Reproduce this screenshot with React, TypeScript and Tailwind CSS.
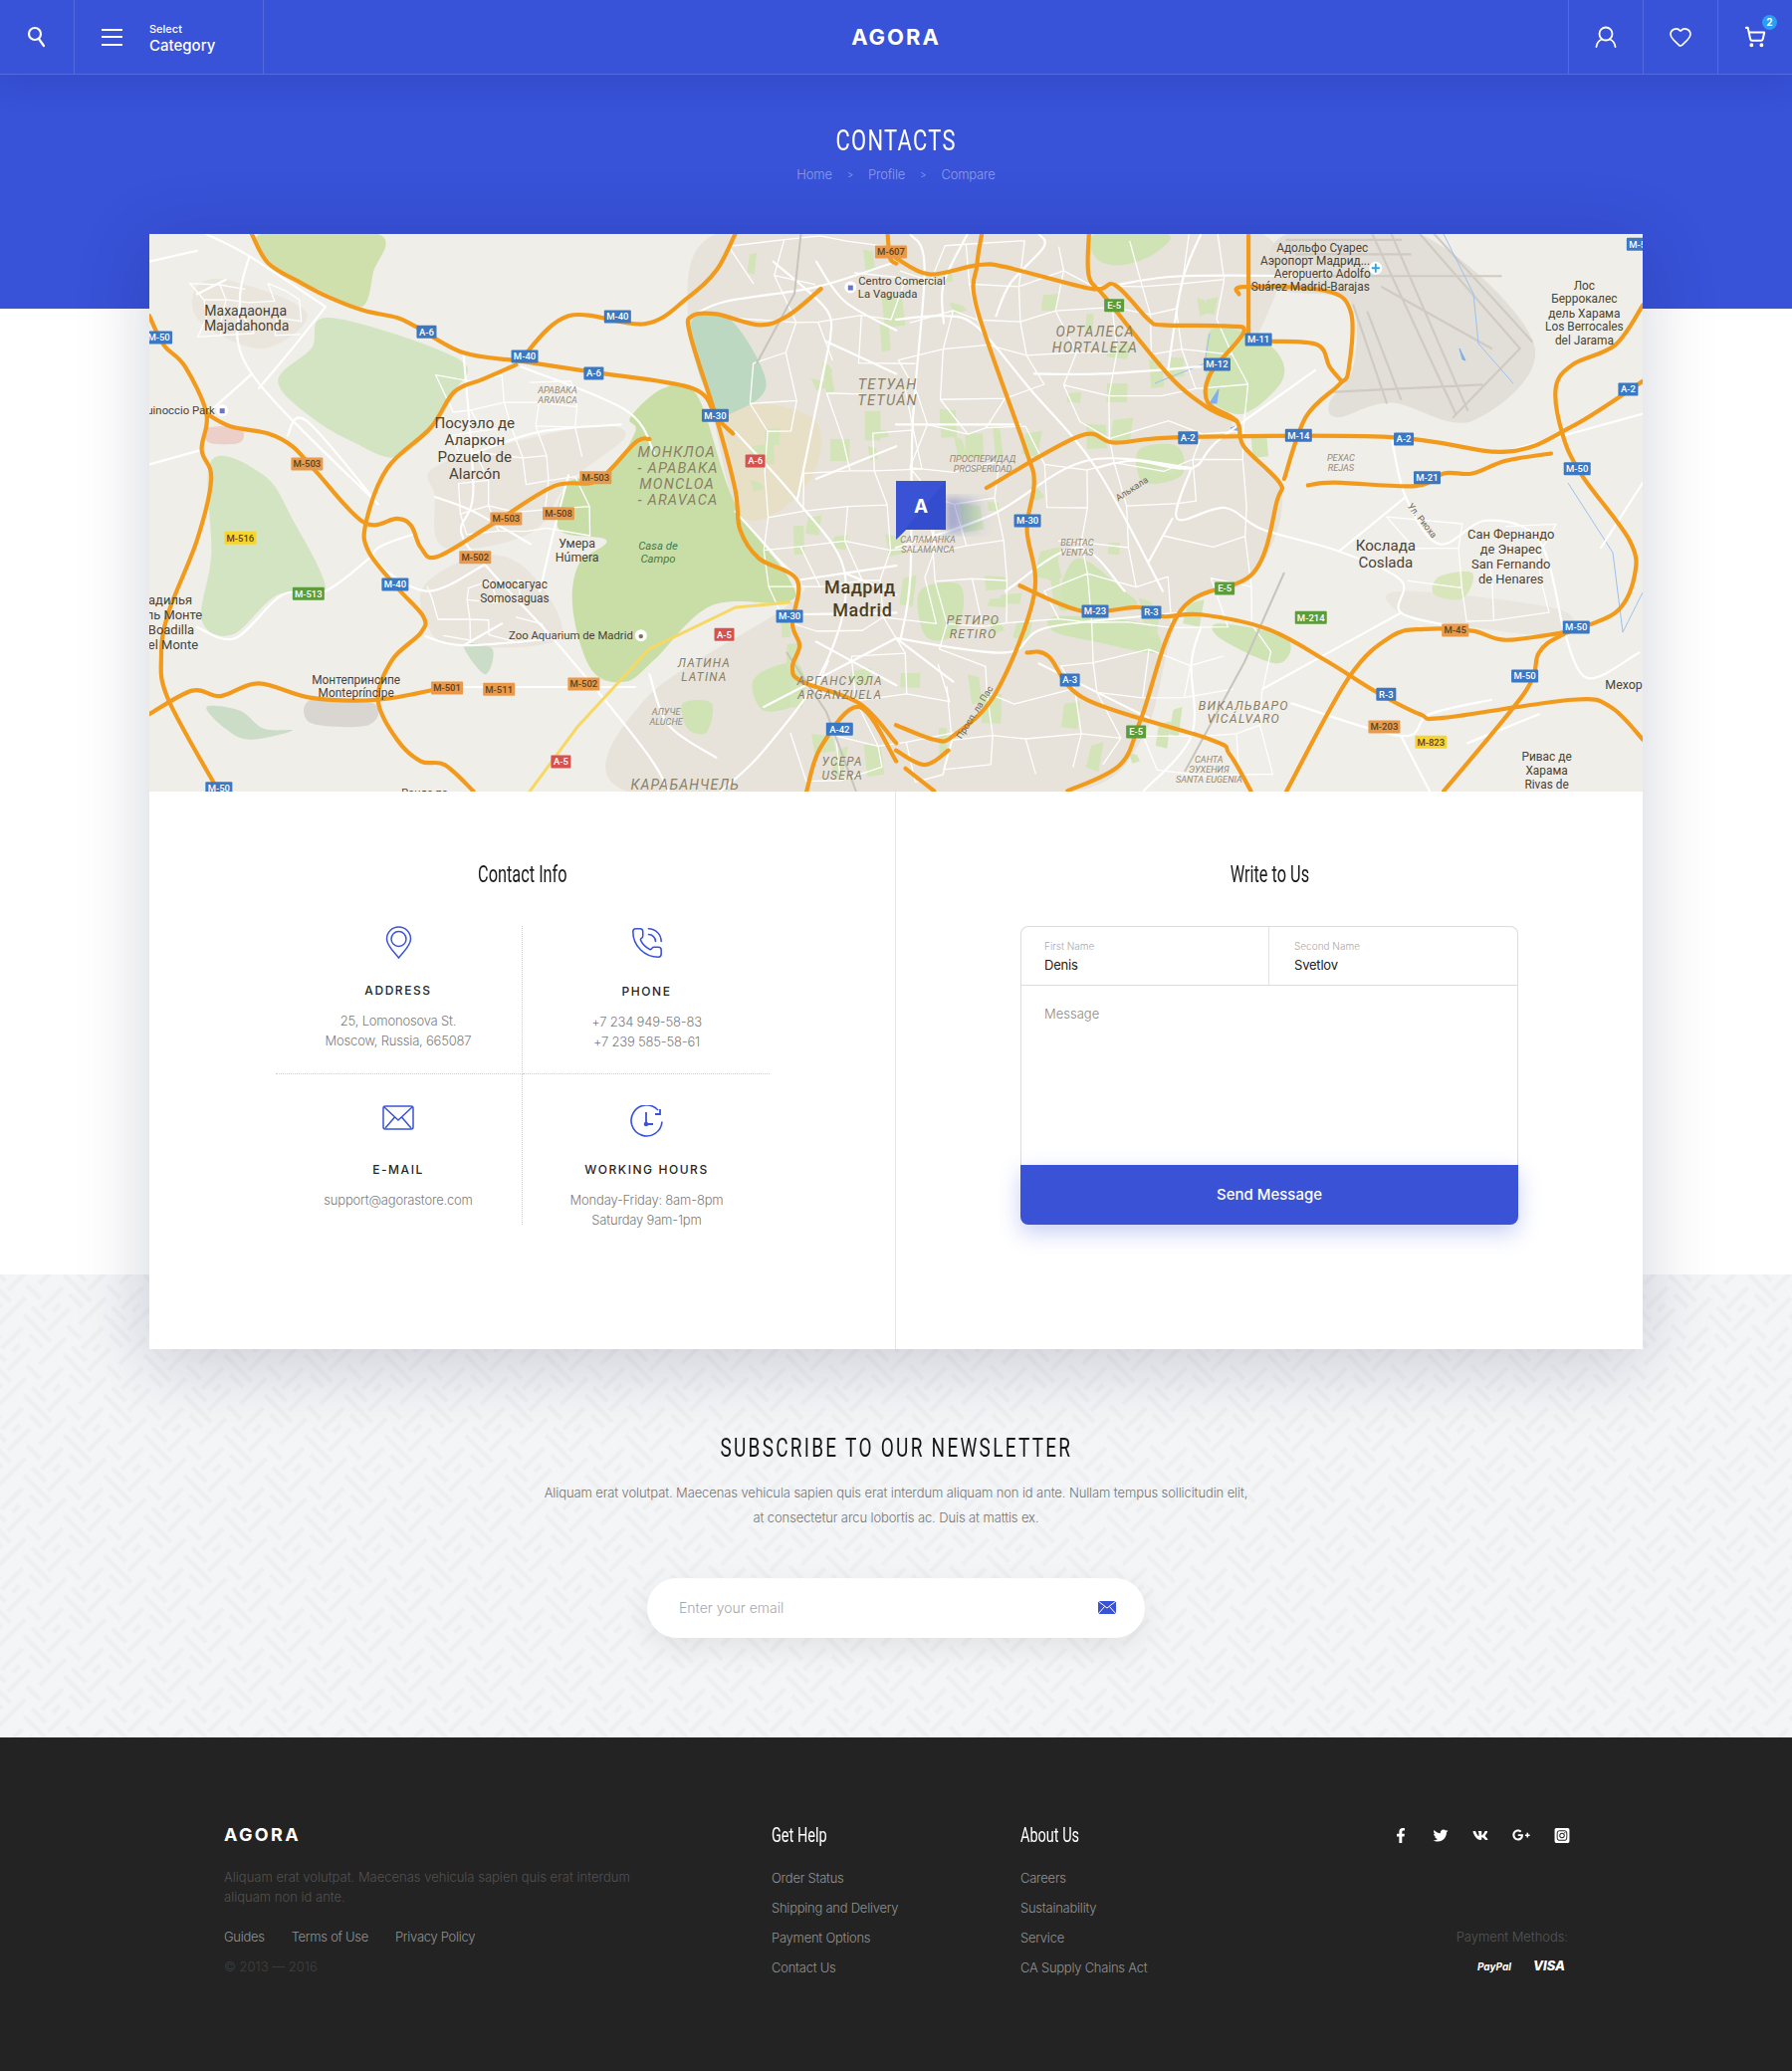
import { Heart, ShoppingCart, PhoneCall } from "lucide-react";
import { FaFacebookF, FaTwitter, FaVk, FaGooglePlusG, FaInstagramSquare } from "react-icons/fa";

const SX = 1 / 2.09;
const SY = 1 / 2.75;
const px = (side: string, x: number) => (side === "L" ? 0 : 750) + x * SX;
const py = (y: number) => y * SY - 5;

function smooth(d: string): string {
  const closed = /Z\s*$/.test(d);
  return d
    .split("M")
    .filter((s) => s.trim())
    .map((sub) => {
      const n = (sub.match(/-?\d+(\.\d+)?/g) || []).map(Number);
      const p: [number, number][] = [];
      for (let i = 0; i + 1 < n.length; i += 2) p.push([n[i], n[i + 1]]);
      const at = (i: number) => (closed ? p[(i + p.length) % p.length] : p[Math.max(0, Math.min(p.length - 1, i))]);
      let out = `M${p[0][0]},${p[0][1]}`;
      const segs = closed ? p.length : p.length - 1;
      for (let i = 0; i < segs; i++) {
        const a = at(i - 1), b = at(i), c = at(i + 1), e = at(i + 2);
        const k = 0.17;
        out += ` C${(b[0] + (c[0] - a[0]) * k).toFixed(1)},${(b[1] + (c[1] - a[1]) * k).toFixed(1)} ${(c[0] - (e[0] - b[0]) * k).toFixed(1)},${(c[1] - (e[1] - b[1]) * k).toFixed(1)} ${c[0]},${c[1]}`;
      }
      return out + (closed ? " Z" : "");
    })
    .join(" ");
}

// seeded random so the drawing is the same on every run
function rng(seed: number) {
  let s = seed;
  return () => {
    s = (s * 16807) % 2147483647;
    return (s - 1) / 2147483646;
  };
}

function streets(side: string, x0: number, y0: number, x1: number, y1: number, dx: number, dy: number, seed: number): [string, string][] {
  const r = rng(seed);
  const pts: [number, number][][] = [];
  for (let y = y0; y <= y1; y += dy) {
    const row: [number, number][] = [];
    for (let x = x0; x <= x1; x += dx) row.push([Math.round(x + (r() - 0.5) * dx * 0.6 + (y - y0) * 0.08), Math.round(y + (r() - 0.5) * dy * 0.5)]);
    pts.push(row);
  }
  let d = "";
  pts.forEach((row, j) =>
    row.forEach((p, i) => {
      if (i + 1 < row.length && r() > 0.3) d += `M${p[0]},${p[1]} L${row[i + 1][0]},${row[i + 1][1]} `;
      if (j + 1 < pts.length && r() > 0.3) d += `M${p[0]},${p[1]} L${pts[j + 1][i][0]},${pts[j + 1][i][1]} `;
    })
  );
  return [[side, d]];
}

function patches(side: string, x0: number, y0: number, x1: number, y1: number, count: number, seed: number): [string, string, string][] {
  const r = rng(seed);
  const out: [string, string, string][] = [];
  for (let i = 0; i < count; i++) {
    const x = Math.round(x0 + r() * (x1 - x0));
    const y = Math.round(y0 + r() * (y1 - y0));
    const w = 14 + r() * 30;
    const h = 22 + r() * 60;
    const t = r() * 24 - 12;
    out.push([side, `M${x},${y} L${(x + w).toFixed(0)},${(y + t).toFixed(0)} L${(x + w + t).toFixed(0)},${(y + h).toFixed(0)} L${(x + t).toFixed(0)},${(y + h + t).toFixed(0)} Z`, "#d3e4b8"]);
  }
  return out;
}

const greens: [string, string, string][] = [
  ["L", "M235,14 L480,14 L470,120 L445,215 L360,170 L270,110 Z", "#cfe0ad"],
  ["L", "M380,245 L650,360 L640,450 L600,540 L520,630 L430,590 L340,520 L270,420 L340,330 Z", "#d3e4c3"],
  ["L", "M130,640 L240,680 L300,800 L370,1000 L270,1010 L175,1120 L110,1080 L130,900 Z", "#d3e4c3"],
  ["L", "M1080,440 L1150,460 L1230,760 L1340,960 L1340,1030 L1180,1040 L1060,1190 L1000,1250 L930,1220 L890,1060 L900,930 L960,860 L860,830 L880,700 L960,680 L1020,560 L1010,520 Z", "#c9dea6"],
  ["L", "M120,1320 L190,1330 L240,1380 L300,1385 L210,1410 L160,1380 Z", "#cbddc6"],
  ["L", "M660,1150 L720,1160 L705,1230 Z", "#cbddc6"],
  ["L", "M1140,250 L1220,250 L1295,430 L1220,510 L1190,500 L1150,380 Z", "#bcd8c0"],
  ["L", "M1270,1240 L1360,1200 L1370,1300 L1290,1330 Z", "#cfe3b4"],
  ["L", "M1120,1310 L1180,1310 L1170,1390 L1130,1380 Z", "#cfe3b4"],
  ["R", "M420,14 L570,14 L540,70 L470,100 L420,80 Z", "#cfe3b4"],
  ["R", "M660,280 L730,285 L800,340 L810,420 L730,510 L660,470 L650,400 Z", "#cfe3b4"],
  ["R", "M380,910 L480,1000 L500,1040 L390,1050 L340,1040 Z", "#cfe3b4"],
  ["R", "M50,1000 L130,980 L140,1060 L110,1130 L60,1120 Z", "#cfe3b4"],
  ["R", "M510,610 L590,600 L600,680 L520,700 Z", "#cfe3b4"],
  ["R", "M680,1090 L820,1130 L800,1200 L680,1130 Z", "#cfe3b4"],
  ["R", "M340,1070 L520,1090 L550,1170 L420,1140 L330,1110 Z", "#cfe3b4"],
  ["R", "M1140,960 L1210,950 L1190,1020 L1130,1010 Z", "#d9e6bc"],
];

const grays: [string, string, string][] = [
  ["L", "M1190,14 L1568,14 L1568,1552 L1000,1552 L1040,1300 L1340,1040 L1360,960 L1240,800 L1180,500 L1130,250 Z", "#e7e3da"],
  ["L", "M610,650 L900,550 L1000,570 L880,700 L800,840 L620,880 L600,740 Z", "#e9e5dd"],
  ["L", "M580,980 L700,900 L800,950 L860,1130 L640,1150 L580,1080 Z", "#e9e5dd"],
  ["L", "M95,170 L160,140 L330,230 L240,330 L110,260 Z", "#eae6de"],
  ["L", "M1220,500 L1390,520 L1400,660 L1320,780 L1240,780 Z", "#e8dfc7"],
  ["L", "M120,550 L190,550 L190,590 L125,590 Z", "#eccfc9"],
  ["L", "M340,1300 L470,1310 L460,1370 L340,1365 Z", "#d9d5d0"],
  ["R", "M0,14 L770,14 L700,500 L810,720 L750,960 L600,1060 L520,1400 L380,1552 L0,1552 Z", "#e7e3da"],
  ["R", "M820,14 L1100,14 L1340,320 L1210,530 L1040,480 L930,520 L910,480 L960,380 L950,200 L800,160 Z", "#e2dfd9"],
  ["R", "M1060,1000 L1390,1050 L1390,1120 L1210,1100 L1060,1060 Z", "#e9e6df"],
];

const tinyGreens: [string, string, string][] = [
  ...patches("L", 1260, 40, 1560, 1500, 26, 11),
  ...patches("R", 10, 30, 760, 1500, 46, 29),
];

const grid: [string, string][] = [
  ...streets("L", 1240, 40, 1568, 1540, 80, 105, 5),
  ...streets("R", 0, 30, 760, 1540, 85, 105, 17),
  ...streets("L", 620, 420, 880, 880, 65, 70, 23),
  ...streets("L", 100, 160, 330, 320, 50, 45, 31),
  ...streets("L", 600, 980, 820, 1140, 55, 50, 37),
  ...streets("R", 1060, 800, 1390, 1080, 100, 90, 41),
];

const white: [string, string][] = [
  ["L", "M120,14 L210,75 L370,215 M210,75 L190,200 L215,400 L480,760 M0,90 L100,60 M0,650 L110,610 M290,570 L330,530 L480,760 M230,440 L300,330 L370,215 M100,180 L160,140 M130,500 L190,430 L215,400"],
  ["L", "M660,350 L680,720 L655,840 L720,950 L860,1150 L1040,1440 L1090,1552 M780,380 L1000,500 L1060,620 M880,680 L850,830 L820,1000 M990,540 L820,560 L680,620 M600,740 L680,780 L800,870 M700,930 L580,1000 L470,900 L560,840"],
  ["L", "M100,1100 L180,1130 L280,1010 L370,1000 L470,900 M580,1125 L660,1150 L860,1130 M600,1265 L1020,1265 M740,1090 L660,1150 M1230,780 L1360,970 M1360,970 L1568,930 M1430,300 L1360,750 M1420,310 L1568,400 M1230,560 L1360,750 L1460,950 L1420,1200 L1290,1440 L1200,1552 M1568,600 L1400,690 M1340,1065 L1568,1060"],
  ["L", "M1140,240 L1210,200 L1400,160 L1568,90 M1310,90 L1420,220 L1430,300 M1400,90 L1460,200 L1568,280 M1050,1230 L1090,1370 L1190,1460 M1290,1320 L1568,1130 M1400,1140 L1568,1260 M1460,950 L1568,1010"],
  ["R", "M30,14 L60,110 L35,540 L30,960 L10,1130 M0,250 L100,240 L170,270 L280,440 L420,660 L560,1000 M0,540 L260,540 M0,880 L200,790 L400,640 L620,660 M230,1000 L380,880 L480,1000 M300,14 L310,50 L240,150 L210,240 M290,400 L430,400 L640,380"],
  ["R", "M620,660 L590,800 L690,770 L770,830 L930,890 L1060,970 L1060,1060 L1180,1100 M580,800 L530,920 M420,660 L500,640 L620,660 L680,580 L880,390 M0,1130 L230,1170 L320,1100 L600,1060 M640,1100 L620,1200 L620,1400 L520,1552 M830,1310 L1060,1400 L1120,1340 L1250,1300"],
  ["R", "M1040,575 L1070,740 L1140,870 L1240,805 L1350,860 L1400,1100 M1070,740 L930,890 M1280,615 L1568,510 M1480,880 L1568,700 M1400,1100 L1450,1240 L1560,1170 M1200,1420 L1350,1340 M1120,1552 L1060,1400 M300,1200 L530,1350 M120,1250 L0,1130"],
  ["R", "M640,14 L600,150 L570,400 M1060,1060 L770,1270 M150,14 L100,150 L100,260 M460,155 L600,130 L880,130"],
];

const runways: [string, string][] = [
  ["R", "M1100,14 L1310,330 L1170,520 M1130,14 L1335,310 M1000,14 L1175,510 M1040,14 L1200,500 M960,210 L1030,480 M990,230 L1060,470 M860,130 L1270,130 M920,450 L1230,430 M1020,160 L1250,330 M820,30 L1060,30 M840,70 L1080,70"],
];

const orange: [string, string][] = [
  ["L", "M215,14 L250,95 L320,150 L380,190 L450,225 L520,245 L560,270 L660,342 L780,365 L930,395 L1140,440 L1190,520 L1225,565"],
  ["L", "M780,360 L880,240 L1040,262 L1130,190 L1190,115 L1230,14"],
  ["L", "M770,375 L700,415 L640,450 L590,550 L500,660 L455,810 L460,890 L520,990 L575,1070 L570,1115 L510,1190 L480,1300 L520,1410 L570,1470 L620,1480 L680,1552"],
  ["L", "M1410,165 L1340,240 L1280,265 L1190,235 L1140,240 L1135,290 L1190,520 L1230,720 L1240,830 L1280,910 L1360,970 L1350,1090 L1365,1150 L1350,1210 L1370,1250 L1490,1310 L1568,1420"],
  ["L", "M0,240 L30,320 L75,380 L120,510 L110,610 L130,690 L100,860 L40,1060 L25,1180 L40,1300 L145,1552"],
  ["L", "M120,510 L170,545 L250,565 L300,600 L350,670 L450,810 L520,800 L550,820 L570,880 L605,905 L720,815 L850,710 L940,695 L1020,590 L1050,580"],
  ["L", "M0,1340 L90,1275 L150,1290 L230,1255 L340,1295 L480,1300 L600,1272"],
  ["L", "M1380,1552 L1410,1430 L1490,1320 L1568,1470"],
  ["L", "M1550,14 L1555,80 L1568,95"],
  ["R", "M180,14 L170,100 L170,220 L270,600 L290,700 L275,830 L290,1010 L210,1280 L120,1400 L80,1410 L0,1370"],
  ["R", "M0,80 L70,125 L170,100 L230,105 L410,165 L460,155 L530,250 L560,265 L690,268 L730,285 L660,400 L655,480 L715,530 L730,600 L805,700 L800,750 L750,950 L600,1050 L515,1350 L470,1480 L360,1552"],
  ["R", "M405,14 L405,130 L440,190 L570,400 L650,490 L715,530"],
  ["R", "M740,14 L740,285"],
  ["R", "M720,180 L730,160 L900,170 L955,230 L950,390 L930,430 L860,520 L815,690"],
  ["R", "M790,310 L885,320 L910,380 L935,420"],
  ["R", "M190,715 L385,572 L460,590 L600,575 L1040,575 L1280,615 L1420,545 L1568,420"],
  ["R", "M1568,210 L1510,320 L1420,375 L1385,440 L1400,570 L1440,680 L1540,860 L1550,960 L1510,1060 L1400,1120 L1350,1170 L1320,1280 L1150,1552"],
  ["R", "M865,708 L920,700 L1090,710 L1150,675 L1210,675 L1280,640 L1375,620"],
  ["R", "M260,985 L390,1055 L510,1045 L560,1070 L640,1065 L780,1105 L900,1190 L1010,1280 L1100,1340 L1150,1350 L1420,1300 L1500,1320 L1568,1410"],
  ["R", "M820,1552 L950,1240 L1040,1125 L1110,1105 L1210,1110 L1280,1135 L1400,1115"],
  ["R", "M275,1170 L320,1180 L400,1300 L660,1410 L700,1450 L745,1552"],
  ["R", "M0,1440 L60,1480 L110,1440"],
  ["R", "M20,1490 L80,1552"],
];

const SHIELD: Record<string, string> = { b: "#3b78c4", o: "#e89a4a", g: "#5d9c3c", r: "#d6524f", y: "#f7d52e" };
const shields: [string, string, number, number, string][] = [
  ["L","M-50",20,300,"b"],["L","A-6",582,284,"b"],["L","M-40",983,242,"b"],["L","M-40",788,352,"b"],["L","A-6",933,399,"b"],["L","M-30",1188,515,"b"],["L","A-6",1272,641,"r"],["L","M-503",331,649,"o"],["L","M-503",937,687,"o"],["L","M-508",859,786,"o"],["L","M-503",749,800,"o"],["L","M-502",684,907,"o"],["L","M-516",191,853,"y"],["L","M-513",334,1007,"g"],["L","M-40",516,982,"b"],["L","M-30",1344,1070,"b"],["L","A-5",1207,1120,"r"],["L","M-501",625,1268,"o"],["L","M-511",734,1271,"o"],["L","M-502",912,1257,"o"],["L","A-5",864,1471,"r"],["L","A-42",1449,1381,"b"],["L","M-50",146,1545,"b"],["L","M-607",1557,63,"o"],
  ["R","E-5",458,211,"g"],["R","M-11",761,305,"b"],["R","M-12",674,374,"b"],["R","A-2",1537,443,"b"],["R","A-2",613,577,"b"],["R","M-14",845,570,"b"],["R","A-2",1066,580,"b"],["R","M-50",1430,662,"b"],["R","M-21",1115,687,"b"],["R","M-30",276,806,"b"],["R","E-5",690,993,"g"],["R","M-23",418,1056,"b"],["R","R-3",536,1059,"b"],["R","M-214",871,1073,"g"],["R","M-45",1174,1108,"o"],["R","M-50",1428,1100,"b"],["R","M-50",1320,1235,"b"],["R","A-3",365,1246,"b"],["R","R-3",1029,1285,"b"],["R","E-5",504,1389,"g"],["R","M-203",1025,1375,"o"],["R","M-823",1123,1417,"y"],["R","M-50",1562,42,"b"],
];

const labels: [string, string, number, number, number, string, string?][] = [
  ["L","Махадаонда",202,225,13,"n"],["L","Majadahonda",204,268,13,"n"],
  ["L","Посуэло де",683,535,14,"n"],["L","Аларкон",683,581,14,"n"],["L","Pozuelo de",683,628,14,"n"],["L","Alarcón",683,675,14,"n"],
  ["L","uinoccio Park",66,500,10.5,"n"],["L","АРАВАКА",857,445,8.5,"s"],["L","ARAVACA",857,473,8.5,"s"],
  ["L","МОНКЛОА",1107,617,13.5,"d"],["L","- АРАВАКА",1110,660,13.5,"d"],["L","MONCLOA",1108,705,13.5,"d"],["L","- ARAVACA",1110,749,13.5,"d"],
  ["L","ТЕТУАН",1550,430,13.5,"d"],["L","TETUÁN",1550,473,13.5,"d"],
  ["L","Умера",898,868,11.5,"n"],["L","Húmera",898,906,11.5,"n"],["L","Casa de",1068,875,10.5,"g"],["L","Campo",1068,911,10.5,"g"],
  ["L","Мадрид",1492,990,18,"b"],["L","Madrid",1497,1052,18,"b"],
  ["L","Centro Comercial",1580,143,10.5,"n"],["L","La Vaguada",1550,179,10.5,"n"],
  ["L","Сомосагуас",767,981,11,"n"],["L","Somosaguas",767,1019,11,"n"],["L","Zoo Aquarium de Madrid",885,1122,10.5,"n"],
  ["L","адилья",44,1025,12,"n"],["L","ль Монте",52,1065,12,"n"],["L","Boadilla",46,1107,12,"n"],["L","el Monte",50,1148,12,"n"],
  ["L","Монтепринсипе",434,1244,11,"n"],["L","Montepríncipe",434,1282,11,"n"],
  ["L","ЛАТИНА",1165,1199,11,"d"],["L","LATINA",1165,1238,11,"d"],["L","АРГАНСУЭЛА",1450,1249,11,"d"],["L","ARGANZUELA",1450,1287,11,"d"],
  ["L","АЛУЧЕ",1085,1333,8.5,"s"],["L","ALUCHE",1085,1361,8.5,"s"],["L","УСЕРА",1455,1472,11,"d"],["L","USERA",1455,1510,11,"d"],
  ["L","КАРАБАНЧЕЛЬ",1125,1535,13,"d"],["L","Ронда по",578,1556,10,"n"],
  ["R","Адольфо Суарес",895,52,11,"n"],["R","Аэропорт Мадрид...",880,88,11,"n"],["R","Aeropuerto Adolfo",895,124,11,"n"],["R","Suárez Madrid-Barajas",870,160,11,"n"],
  ["R","ОРТАЛЕСА",418,284,13,"d"],["R","HORTALEZA",418,327,13,"d"],
  ["R","Лос",1445,155,11,"n"],["R","Беррокалес",1445,193,11,"n"],["R","дель Харама",1445,232,11,"n"],["R","Los Berrocales",1445,270,11,"n"],["R","del Jarama",1445,308,11,"n"],
  ["R","ПРОСПЕРИДАД",182,635,8.5,"s"],["R","PROSPERIDAD",182,662,8.5,"s"],["R","РЕХАС",934,632,8.5,"s"],["R","REJAS",934,660,8.5,"s"],
  ["R","САЛАМАНКА",67,858,8.5,"s"],["R","SALAMANCA",67,885,8.5,"s"],["R","ВЕНТАС",380,866,8.5,"s"],["R","VENTAS",380,894,8.5,"s"],
  ["R","Коcлада",1028,875,14,"n"],["R","Coslada",1028,920,14,"n"],
  ["R","Сан Фернандо",1291,843,12,"n"],["R","де Энарес",1291,884,12,"n"],["R","San Fernando",1291,925,12,"n"],["R","de Henares",1291,966,12,"n"],
  ["R","РЕТИРО",162,1079,11.5,"d"],["R","RETIRO",162,1117,11.5,"d"],["R","ВИКАЛЬВАРО",730,1315,11.5,"d"],["R","VICÁLVARO",730,1353,11.5,"d"],
  ["R","САНТА",657,1466,8.5,"s"],["R","ЭУХЕНИЯ",657,1493,8.5,"s"],["R","SANTA EUGENIA",657,1521,8.5,"s"],
  ["R","Мехор",1528,1258,11.5,"n"],["R","Ривас де",1366,1456,11,"n"],["R","Харама",1366,1495,11,"n"],["R","Rivas de",1366,1533,11,"n"],
  ["R","Алькала",495,717,8.5,"r","-33"],["R","Ул. Риоха",1105,805,8.5,"r","52"],["R","Просп. ла Пас",165,1335,8.5,"r","-58"],
];

const COLORS: Record<string, string> = { n: "#4a4336", d: "#8a7f68", s: "#94897a", g: "#3f7a52", b: "#4c3f24", r: "#6f6757" };

function PathLayer({ items, stroke, width, curve }: { items: [string, string][]; stroke: string; width: number; curve?: boolean }) {
  return (
    <>
      {items.map(([s, d], i) => (
        <path
          key={i}
          d={curve ? smooth(d) : d}
          transform={`matrix(${SX} 0 0 ${SY} ${s === "L" ? 0 : 750} -5)`}
          vectorEffect="non-scaling-stroke"
          fill="none"
          stroke={stroke}
          strokeWidth={width}
          strokeLinecap="round"
          strokeLinejoin="round"
        />
      ))}
    </>
  );
}

function MapDrawing() {
  return (
    <svg viewBox="0 0 1500 560" width="1500" height="560" className="block" fontFamily="Roboto, 'Liberation Sans', sans-serif">
      <rect width="1500" height="560" fill="#f0eee8" />
      {grays.map(([s, d, f], i) => (
        <path key={i} d={smooth(d)} fill={f} transform={`matrix(${SX} 0 0 ${SY} ${s === "L" ? 0 : 750} -5)`} />
      ))}
      {[...greens, ...tinyGreens].map(([s, d, f], i) => (
        <path key={i} d={i < greens.length ? smooth(d) : d} fill={f} transform={`matrix(${SX} 0 0 ${SY} ${s === "L" ? 0 : 750} -5)`} />
      ))}
      <PathLayer items={runways} stroke="#d0cbc2" width={2.2} />
      <path d="M1300,0 L1330,60 L1335,110 L1370,150 M1010,150 L1060,130 L1065,100 M1425,250 L1470,320 L1480,400 L1500,360" fill="none" stroke="#9cc0ee" strokeWidth="1" />
      <path d="M1316,115 l6,12 l-3,-1 Z M1065,170 l9,-14 l-2,14 Z M1086,195 l10,-4 l0,8 Z" fill="#7fb0ea" stroke="#7fb0ea" />
      <PathLayer items={grid} stroke="#ffffff" width={1.3} />
      <PathLayer items={white} stroke="#ffffff" width={2.2} curve />
      <path d="M655,-5 L648,60 L610,130 M1140,340 L1100,430 L1040,540 M640,420 L680,480 L710,560" fill="none" stroke="#c7c4bd" strokeWidth="2" />
      <path d="M382,560 L430,495 L502,417 L589,375 L643,370" fill="none" stroke="#f6d965" strokeWidth="3" strokeLinecap="round" />
      <PathLayer items={orange} stroke="#f29a1c" width={4.2} curve />
      {labels.map(([s, t, x, y, rawSize, k, rot], i) => {
        const X = px(s, x);
        const Y = py(y);
        const size = k === "b" ? rawSize : rawSize * 1.08;
        return (
          <text
            key={i}
            x={X}
            y={Y + size * 0.35}
            fontSize={size}
            textAnchor="middle"
            fill={COLORS[k]}
            fontStyle={k === "d" || k === "s" || k === "g" ? "italic" : "normal"}
            fontWeight={k === "b" ? 500 : 400}
            letterSpacing={k === "d" ? 1.2 : k === "b" ? 0.6 : 0}
            transform={rot ? `rotate(${rot} ${X} ${Y})` : undefined}
          >
            {t}
          </text>
        );
      })}
      {shields.map(([s, t, x, y, c], i) => {
        const X = px(s, x);
        const Y = py(y);
        const w = t.length >= 5 ? 32 : t.length === 4 ? 27 : 20;
        return (
          <g key={i}>
            <rect x={X - w / 2} y={Y - 6.5} width={w} height={13} rx={1} fill={SHIELD[c]} />
            <text x={X} y={Y + 3.4} fontSize="9.5" fontWeight="500" textAnchor="middle" fill={c === "b" || c === "g" || c === "r" ? "#fff" : "#5a4326"}>
              {t}
            </text>
          </g>
        );
      })}
      <circle cx={px("R", 1007)} cy={py(108)} r="6.5" fill="#fff" />
      <path d={`M${px("R", 1007)} ${py(108) - 4.5} v9 M${px("R", 1007) - 4} ${py(108)} h8`} stroke="#27a5e8" strokeWidth="1.8" />
      <circle cx={px("L", 153)} cy={py(501)} r="6" fill="#fff" />
      <rect x={px("L", 153) - 2.5} y={py(501) - 2} width="5" height="5" fill="#6b74c9" />
      <circle cx={px("L", 1472)} cy={py(161)} r="6" fill="#fff" />
      <rect x={px("L", 1472) - 2.5} y={py(161) - 2} width="5" height="5" fill="#6b74c9" />
      <circle cx={px("L", 1032)} cy={py(1123)} r="6" fill="#fff" />
      <circle cx={px("L", 1032)} cy={py(1125)} r="2.2" fill="#7a6e5c" />
      <defs>
        <linearGradient id="mk" x1="0" y1="0" x2="1" y2="0">
          <stop offset="0" stopColor="#3a4cb4" stopOpacity=".45" />
          <stop offset="1" stopColor="#3a4cb4" stopOpacity="0" />
        </linearGradient>
        <filter id="blur"><feGaussianBlur stdDeviation="4" /></filter>
      </defs>
      <rect x="800" y="265" width="42" height="35" fill="url(#mk)" filter="url(#blur)" />
      <path d="M750,248 h50 v49 h-40 l-10,10 Z" fill="#3a53d4" />
      <path d="M800,248 v49 h-40 l-10,10 Z" fill="#2f48c8" opacity=".55" />
      <text x="775" y="280" fontSize="19" fontWeight="700" textAnchor="middle" fill="#fff" fontFamily="Inter, sans-serif">A</text>
    </svg>
  );
}

const cond = "inline-block font-[family-name:Roboto,sans-serif] font-normal";

function Cell({ icon, iconH, title, lines, className }: { icon: React.ReactNode; iconH: string; title: string; lines: string[]; className: string }) {
  return (
    <div className={`flex flex-col items-center text-center ${className}`}>
      <div className={`flex items-start justify-center ${iconH}`}>{icon}</div>
      <div className="mt-[23px] text-[12px] leading-[20px] font-medium tracking-[0.13em] text-[#262626]">{title}</div>
      <div className="mt-[10px] text-[13px] leading-[20px] font-light tracking-[-0.2px] text-[#7d7d7d]">
        {lines.map((l) => (
          <div key={l}>{l}</div>
        ))}
      </div>
    </div>
  );
}

const Blue = "#3a53d6";

export default function App() {
  return (
    <div className="w-[1800px] bg-white font-[family-name:Inter,'Liberation_Sans',sans-serif] text-[#222]">
      <section className="relative h-[310px] bg-[#3852d8] text-white">
        <header className="grid h-[75px] grid-cols-[1fr_auto_1fr] border-b border-white/15 shadow-[0_10px_30px_rgba(20,30,110,0.13)]">
          <div className="flex">
            <div className="flex w-[75px] items-center justify-center border-r border-white/15">
              <svg width="20" height="22" viewBox="0 0 20 22" fill="none" stroke="#fff" strokeWidth="2.2" strokeLinecap="round">
                <circle cx="8" cy="8" r="6" />
                <path d="M12 13l5 7" />
              </svg>
            </div>
            <div className="flex w-[190px] items-center border-r border-white/15 pl-[27px]">
              <div className="flex w-[21px] flex-col gap-[5.5px]">
                <span className="h-[2px] bg-white" />
                <span className="h-[2px] bg-white" />
                <span className="h-[2px] bg-white" />
              </div>
              <div className="ml-[27px] pt-[2px]">
                <div className="text-[11px] leading-[14px] font-medium">Select</div>
                <div className="text-[15px] leading-[19px] font-medium">Category</div>
              </div>
            </div>
          </div>
          <div className="flex items-center text-[22px] font-bold tracking-[0.09em]">AGORA</div>
          <div className="flex justify-end">
            <div className="flex w-[75px] items-center justify-center border-l border-white/15">
              <svg width="22" height="22" viewBox="0 0 22 22" fill="none" stroke="#fff" strokeWidth="1.8" strokeLinecap="round">
                <circle cx="11" cy="8" r="6.5" />
                <path d="M1.500 21c.5-4.500 3-6.500 5.500-7.500M20.500 21c-.5-4.500-3-6.500-5.500-7.500" />
              </svg>
            </div>
            <div className="flex w-[75px] items-center justify-center border-l border-white/15">
              <Heart size={24} strokeWidth={1.7} />
            </div>
            <div className="relative flex w-[75px] items-center justify-center border-l border-white/15">
              <ShoppingCart size={22} strokeWidth={2.2} />
              <span className="absolute top-[15px] right-[15px] flex h-[15px] w-[15px] items-center justify-center rounded-full bg-[#2a9df4] text-[10px] font-bold">2</span>
            </div>
          </div>
        </header>
        <div className="mt-[46px] h-[40px] text-center">
          <h1 className={`${cond} scale-x-[0.73] text-[30px] leading-[40px] tracking-[0.06em]`}>CONTACTS</h1>
        </div>
        <nav className="mt-[4px] flex items-center justify-center gap-[15px] text-[13px] leading-[20px] font-light tracking-[-0.2px] text-white/45">
          <span>Home</span>
          <span className="text-[10px]">&gt;</span>
          <span>Profile</span>
          <span className="text-[10px]">&gt;</span>
          <span>Compare</span>
        </nav>
      </section>

      <main className="relative z-10 mx-auto -mt-[75px] w-[1500px] bg-white shadow-[0_12px_70px_rgba(10,15,60,0.18)]">
        <div className="h-[560px] overflow-hidden">
          <MapDrawing />
        </div>
        <div className="grid h-[560px] grid-cols-2">
          <div className="border-r border-[#e6e6e6] pt-[68px]">
            <div className="h-[30px] text-center">
              <h2 className={`${cond} scale-x-[0.68] text-[24px] leading-[30px] text-[#1c1c1c]`}>Contact Info</h2>
            </div>
            <div className="mx-auto mt-[37px] grid w-[496px] grid-cols-2">
              <Cell
                className="h-[149px] border-r border-b border-dotted border-[#cfcfcf]"
                iconH="h-[32px]"
                title="ADDRESS"
                lines={["25, Lomonosova St.", "Moscow, Russia, 665087"]}
                icon={
                  <svg width="27" height="33" viewBox="0 0 27 33" fill="none" stroke={Blue} strokeWidth="1.5">
                    <path d="M13.500 32C9 26 1.500 20 1.500 13A12 12 0 0 1 25.500 13C25.500 20 18 26 13.500 32Z" />
                    <circle cx="13.500" cy="13" r="7.500" />
                  </svg>
                }
              />
              <Cell
                className="h-[149px] border-b border-dotted border-[#cfcfcf] pl-[2px]"
                iconH="h-[33px]"
                title="PHONE"
                lines={["+7 234 949-58-83", "+7 239 585-58-61"]}
                icon={<PhoneCall size={34} strokeWidth={1.1} color={Blue} />}
              />
              <Cell
                className="h-[151px] border-r border-dotted border-[#cfcfcf] pt-[31px]"
                iconH="h-[32px]"
                title="E-MAIL"
                lines={["support@agorastore.com"]}
                icon={
                  <svg width="32" height="25" viewBox="0 0 32 25" fill="none" stroke={Blue} strokeWidth="1.5">
                    <rect x="1" y="1" width="30" height="23" rx="2" />
                    <path d="M2 2l14 13L30 2M3 23l9.500-11M29 23L19.500 12" />
                  </svg>
                }
              />
              <Cell
                className="h-[151px] pt-[31px] pl-[2px]"
                iconH="h-[32px]"
                title="WORKING HOURS"
                lines={["Monday-Friday:  8am-8pm", "Saturday 9am-1pm"]}
                icon={
                  <svg width="33" height="33" viewBox="0 0 33 33" fill="none" stroke={Blue} strokeWidth="1.6">
                    <path d="M28 5A15.500 15.500 0 1 0 32 16.500" />
                    <path d="M16 7v12h7" strokeWidth="1.8" />
                    <circle cx="16" cy="19" r="1.500" fill={Blue} />
                    <path d="M30 4l0 5-5 0" strokeWidth="1.8" />
                  </svg>
                }
              />
            </div>
          </div>
          <div className="pt-[68px]">
            <div className="h-[30px] text-center">
              <h2 className={`${cond} scale-x-[0.68] text-[24px] leading-[30px] text-[#1c1c1c]`}>Write to Us</h2>
            </div>
            <div className="mx-auto mt-[37px] w-[500px]">
              <div className="h-[240px] rounded-t-lg border border-b-0 border-[#dcdcdc]">
                <div className="flex h-[59px] border-b border-[#dcdcdc]">
                  <div className="w-[249px] border-r border-[#e2e2e2] pt-[12px] pl-[23px]">
                    <div className="text-[10px] leading-[14px] font-light text-[#aaa]">First Name</div>
                    <div className="mt-[3px] text-[13px] leading-[18px] tracking-[-0.2px] text-[#222]">Denis</div>
                  </div>
                  <div className="pt-[12px] pl-[25px]">
                    <div className="text-[10px] leading-[14px] font-light text-[#aaa]">Second Name</div>
                    <div className="mt-[3px] text-[13px] leading-[18px] tracking-[-0.2px] text-[#222]">Svetlov</div>
                  </div>
                </div>
                <div className="pt-[18px] pl-[23px] text-[13px] leading-[20px] font-light text-[#8a8a8a]">Message</div>
              </div>
              <button className="h-[60px] w-full rounded-b-lg bg-[#3a53d6] text-[15px] font-medium text-white shadow-[0_8px_22px_rgba(58,83,214,0.28)]">Send Message</button>
            </div>
          </div>
        </div>
      </main>

      <section className="relative -mt-[75px] h-[465px] overflow-hidden bg-[#f4f5f7] pt-[156px] text-center">
        <svg className="absolute inset-0" width="1800" height="465" aria-hidden="true">
          <defs>
            <pattern id="maze" width="57" height="57" patternUnits="userSpaceOnUse" patternTransform="translate(-12 -4) rotate(45)">
              <g fill="none" stroke="#eeeff1" strokeWidth="4.500" strokeLinecap="butt">
                <path d="M0 6H38M46 0V30M8 16V46M18 16H36M28 26V57M38 40H57M0 52H20M46 50V57M18 30V40" />
              </g>
            </pattern>
          </defs>
          <rect width="1800" height="465" fill="url(#maze)" />
        </svg>
        <div className="relative">
          <div className="h-[36px]">
            <h2 className={`${cond} scale-x-[0.73] text-[26px] leading-[36px] tracking-[0.12em] text-[#161616]`}>SUBSCRIBE TO OUR NEWSLETTER</h2>
          </div>
          <p className="mt-[15px] text-[13px] leading-[25px] font-light tracking-[-0.11px] text-[#757575]">
            Aliquam erat volutpat. Maecenas vehicula sapien quis erat interdum aliquam non id ante. Nullam tempus sollicitudin elit,
            <br />
            at consectetur arcu lobortis ac. Duis at mattis ex.
          </p>
          <div className="mx-auto mt-[48px] flex h-[60px] w-[500px] items-center justify-between rounded-full bg-white pr-[29px] pb-[2px] pl-[32px] shadow-[0_10px_30px_rgba(0,0,0,0.08)]">
            <span className="text-[14px] font-light text-[#a8a8a8]">Enter your email</span>
            <svg width="18" height="13" viewBox="0 0 18 13">
              <rect width="18" height="13" fill={Blue} />
              <path d="M0 0l9 7 9-7M0 13l6.500-7.500M18 13l-6.500-7.500" fill="none" stroke="#fff" strokeWidth="1" />
            </svg>
          </div>
        </div>
      </section>

      <footer className="grid h-[335px] grid-cols-[550px_250px_1fr] bg-[#232323] px-[225px] pt-[86px]">
        <div>
          <div className="text-[18px] leading-[24px] font-bold tracking-[0.13em] text-white">AGORA</div>
          <p className="mt-[20px] text-[13px] leading-[20px] font-light text-[#515151]">
            Aliquam erat volutpat. Maecenas vehicula sapien quis erat interdum
            <br />
            aliquam non id ante.
          </p>
          <div className="mt-[20px] flex gap-[27px] text-[13px] leading-[20px] font-light tracking-[-0.3px] text-[#929292]">
            <span>Guides</span>
            <span>Terms of Use</span>
            <span>Privacy Policy</span>
          </div>
          <div className="mt-[10px] text-[13px] leading-[20px] font-light text-[#404040]">© 2013 — 2016</div>
        </div>
        <div>
          <div className="h-[24px]">
            <h3 className={`${cond} origin-left scale-x-[0.69] text-[21px] leading-[24px] text-white`}>Get Help</h3>
          </div>
          <ul className="mt-[16px] text-[13px] leading-[30px] font-light tracking-[-0.25px] text-[#929292]">
            <li>Order Status</li>
            <li>Shipping and Delivery</li>
            <li>Payment Options</li>
            <li>Contact Us</li>
          </ul>
        </div>
        <div className="flex justify-between">
          <div>
            <div className="h-[24px]">
              <h3 className={`${cond} origin-left scale-x-[0.69] text-[21px] leading-[24px] text-white`}>About Us</h3>
            </div>
            <ul className="mt-[16px] text-[13px] leading-[30px] font-light tracking-[-0.25px] text-[#929292]">
              <li>Careers</li>
              <li>Sustainability</li>
              <li>Service</li>
              <li>CA Supply Chains Act</li>
            </ul>
          </div>
          <div className="flex flex-col items-end">
            <div className="-mr-[2px] flex h-[24px] items-center gap-[24px] text-[15px] text-white">
              <FaFacebookF className="w-[16px]" />
              <FaTwitter className="w-[16px]" />
              <FaVk className="w-[16px]" />
              <FaGooglePlusG className="w-[18px]" size={20} />
              <FaInstagramSquare className="w-[16px]" size={17} />
            </div>
            <div className="mt-[80px] text-[13px] leading-[20px] font-light tracking-[-0.05px] text-[#555]">Payment Methods:</div>
            <div className="mt-[10px] flex h-[20px] items-center gap-[22px] pr-[3px] text-white italic">
              <span className="text-[10px] font-bold">PayPal</span>
              <span className="text-[13px] font-extrabold">VISA</span>
            </div>
          </div>
        </div>
      </footer>
    </div>
  );
}
